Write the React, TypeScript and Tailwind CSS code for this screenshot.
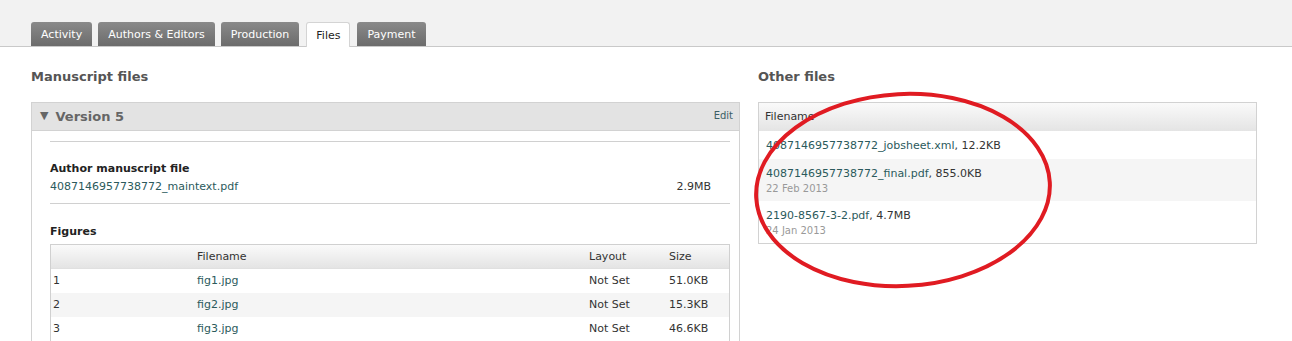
const tabs = ['Activity', 'Authors & Editors', 'Production', 'Files', 'Payment']

const figures = [
  { n: '1', name: 'fig1.jpg', layout: 'Not Set', size: '51.0KB' },
  { n: '2', name: 'fig2.jpg', layout: 'Not Set', size: '15.3KB' },
  { n: '3', name: 'fig3.jpg', layout: 'Not Set', size: '46.6KB' },
]

const others = [
  { name: '4087146957738772_jobsheet.xml', size: '12.2KB', date: '' },
  { name: '4087146957738772_final.pdf', size: '855.0KB', date: '22 Feb 2013' },
  { name: '2190-8567-3-2.pdf', size: '4.7MB', date: '24 Jan 2013' },
]

const App = () => {
  return (
    <div className="relative w-[1292px] h-[341px] overflow-hidden bg-white text-[11px] text-[#333] font-['DejaVu_Sans',Verdana,sans-serif]">
      {/* tab bar */}
      <div className="flex items-end gap-[6px] h-[47px] pl-[31px] bg-[#f2f2f2] border-b border-[#c9c9c9]">
        {tabs.map((tab) =>
          tab === 'Files' ? (
            <div
              key={tab}
              className="-mb-px flex items-center h-[25px] pt-[2px] px-[9px] mx-[1px] bg-white border border-b-0 border-[#d4d4d4] rounded-t-[3px] text-[#222]"
            >
              {tab}
            </div>
          ) : (
            <div
              key={tab}
              className="flex items-center h-[24px] pt-[2px] px-[10px] bg-gradient-to-b from-[#8a8a8a] to-[#6c6c6c] rounded-t-[3px] text-white"
            >
              {tab}
            </div>
          )
        )}
      </div>

      <div className="flex gap-[18px] px-[31px]">
        {/* manuscript files */}
        <div className="w-[709px] shrink-0">
          <h2 className="mt-[22px] mb-[18px] h-[15px] leading-[15px] text-[13px] font-bold text-[#555]">
            Manuscript files
          </h2>
          <div className="border border-[#d2d2d2] border-b-0">
            <div className="flex justify-between h-[28px] bg-[#e3e3e3] border-b border-[#d2d2d2]">
              <div className="flex items-center pl-[8px] text-[13px] font-bold text-[#666]">
                <span className="mr-[7px] text-[11px]">▼</span>
                Version 5
              </div>
              <a className="pt-[5px] pr-[6px] text-[10px] text-[#3b5f66]">Edit</a>
            </div>
            <div className="pl-[18px] pr-[9px]">
              <div className="mt-[10px] border-t border-[#d0d0d0]" />
              <div className="pt-[20px] pb-[9px] border-b border-[#d0d0d0]">
                <div className="font-bold text-[#222] leading-[14px]">Author manuscript file</div>
                <div className="flex justify-between mt-[4px] leading-[14px]">
                  <a className="text-[#2b5a5c]">4087146957738772_maintext.pdf</a>
                  <span className="pr-[19px]">2.9MB</span>
                </div>
              </div>
              <div className="pt-[21px] pb-[5px] font-bold text-[#222] leading-[14px]">Figures</div>
              <div className="border border-[#d0d0d0] border-b-0">
                <div className="grid grid-cols-[144px_392px_81px_1fr] h-[24px] pt-[1px] items-center bg-gradient-to-b from-[#fafafa] to-[#e4e4e4] border-b border-[#e0e0e0]">
                  <span />
                  <span className="pl-[2px]">Filename</span>
                  <span className="pl-[2px]">Layout</span>
                  <span className="pl-[1px]">Size</span>
                </div>
                {figures.map((f, i) => (
                  <div
                    key={f.n}
                    className={`grid grid-cols-[144px_392px_81px_1fr] h-[24px] items-center ${i % 2 === 1 ? 'bg-[#f5f5f5]' : 'bg-white'}`}
                  >
                    <span className="pl-[2px]">{f.n}</span>
                    <a className="pl-[2px] text-[#2b5a5c]">{f.name}</a>
                    <span className="pl-[2px]">{f.layout}</span>
                    <span className="pl-[1px]">{f.size}</span>
                  </div>
                ))}
              </div>
            </div>
          </div>
        </div>

        {/* other files */}
        <div className="w-[499px] shrink-0">
          <h2 className="mt-[22px] mb-[18px] h-[15px] leading-[15px] text-[13px] font-bold text-[#555]">
            Other files
          </h2>
          <div className="border border-[#d2d2d2]">
            <div className="flex items-center h-[28px] pt-[1px] pl-[6px] bg-gradient-to-b from-[#fafafa] to-[#e4e4e4]">
              Filename
            </div>
            {others.map((o, i) => (
              <div
                key={o.name}
                className={`flex flex-col justify-center pt-[2px] px-[7px] ${o.date ? 'h-[42px]' : 'h-[28px]'} ${i % 2 === 1 ? 'bg-[#f5f5f5]' : 'bg-white'}`}
              >
                <div className="leading-[14px]">
                  <a className="text-[#2b5a5c]">{o.name}</a>, {o.size}
                </div>
                {o.date && <div className="mt-[1px] leading-[13px] text-[10px] text-[#999]">{o.date}</div>}
              </div>
            ))}
          </div>
        </div>
      </div>

      {/* red annotation circle */}
      <svg className="absolute left-0 top-0 pointer-events-none" width="1292" height="341">
        <ellipse cx="903" cy="190" rx="147" ry="96" fill="none" stroke="#e01b22" strokeWidth="4" transform="rotate(-3 903 190)" />
      </svg>
    </div>
  )
}

export default App
